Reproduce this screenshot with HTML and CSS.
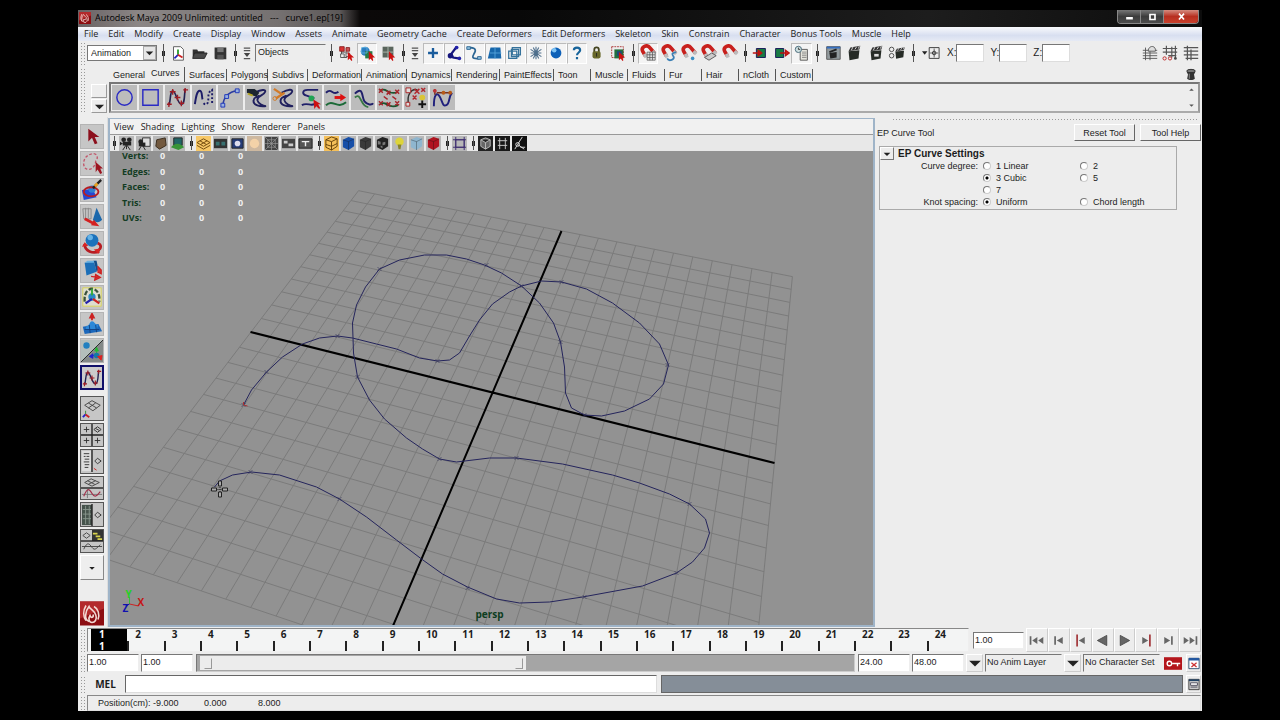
FILE: index.html
```html
<!DOCTYPE html>
<html lang="en">
<head>
<meta charset="utf-8">
<title>Autodesk Maya 2009 Unlimited</title>
<link rel="stylesheet" href="styles.css">
</head>
<body>
<svg class="sprite" aria-hidden="true">
<defs>
<symbol id="maya" viewBox="0 0 24 24"><rect width="24" height="24" fill="#8c0d12"/><path d="M0 0h24v7L0 17z" fill="#b32a2c"/><path d="M9 20c-5-2-4-10 0-15 1 3 6 4 7 9 1 4-1 7-4 7s-4-4-2-7c1 3 4 2 3-1M6 4c-3 5-3 11 0 15M14 5c4 2 6 8 4 13" fill="none" stroke="#f3d9d4" stroke-width="1.6"/></symbol>
<symbol id="new" viewBox="0 0 20 20"><path d="M5 3h8l3 3v12H5z" fill="#fff" stroke="#555"/><path d="M10 6v6" stroke="#2a9a2a" stroke-width="2"/><path d="M10 12l-4 4" stroke="#22b" stroke-width="2"/><path d="M10 12l5 3" stroke="#c22" stroke-width="2"/></symbol>
<symbol id="open" viewBox="0 0 20 20"><path d="M3 6h5l1 2h7v2H6l-3 5z" fill="#333"/><path d="M5 10h14l-3 6H3z" fill="#4a4a4a" stroke="#222"/></symbol>
<symbol id="save" viewBox="0 0 20 20"><path d="M4 4h13v13H5l-1-1z" fill="#333"/><path d="M7 4h7v5H7z" fill="#777"/><path d="M7 12h7v5H7z" fill="#555"/></symbol>
<symbol id="chev" viewBox="0 0 10 20"><path d="M1 4h8M1 7h8M1 17h8" stroke="#555" stroke-width="1.500"/><path d="M1 10h8l-4 5z" fill="#444"/></symbol>
<symbol id="hier" viewBox="0 0 20 20"><path d="M5 6v9h6M5 9h6" fill="none" stroke="#444"/><path d="M3 3h5v5H3z" fill="#d33" stroke="#822"/><path d="M10 4h4v4h-4z" fill="#c55" stroke="#822"/><path d="M4 11h4v4H4zM10 10h4v4h-4z" fill="#eee" stroke="#555"/><path d="M12 9v9l2-2 2 3 1-1-1-3h3z" fill="#c11"/></symbol>
<symbol id="obj" viewBox="0 0 20 20"><circle cx="8" cy="8" r="5" fill="#2b7cc0"/><path d="M8 8h8v8H8z" fill="#287d49"/><path d="M4 4h6v6H4z" fill="none" stroke="#5db0e0"/><path d="M12 8v10l2-2 2 3 1-1-1-3h3z" fill="#c11"/></symbol>
<symbol id="comp" viewBox="0 0 20 20"><path d="M4 3h12v12H4z" fill="#5a655c"/><path d="M4 9h12M10 3v12" stroke="#aeb9ae"/><path d="M11 8v10l2-2 2 3 1-1-1-3h3z" fill="#c11"/></symbol>
<symbol id="plus" viewBox="0 0 20 20"><path d="M10 4.500v11M4.500 10h11" stroke="#1a5c9c" stroke-width="2.600"/></symbol>
<symbol id="joint" viewBox="0 0 20 20"><path d="M13 3L7 11l2 4 6 1" fill="none" stroke="#15157c" stroke-width="2.500"/><circle cx="13" cy="4" r="2" fill="#22a"/><circle cx="6" cy="13" r="3" fill="#15157c"/><circle cx="16" cy="16" r="2" fill="#22a"/></symbol>
<symbol id="curve" viewBox="0 0 20 20"><path d="M3 5c5-2 10 0 8 4s-6 8 5 7" fill="none" stroke="#2c6694" stroke-width="2"/><path d="M2 3h4v3H2zM14 14h4v3h-4z" fill="#8fc0dd" stroke="#2c6694"/></symbol>
<symbol id="surf" viewBox="0 0 20 20"><path d="M5 4h11l1 12H2z" fill="#1767ab"/><path d="M4 10h13M10 4v12" stroke="#56a3da"/></symbol>
<symbol id="cage" viewBox="0 0 20 20"><path d="M3 8h9v8H3zM7 4h9v8H7zM6 6h8v8H6z" fill="none" stroke="#35729b" stroke-width="1.400"/></symbol>
<symbol id="burst" viewBox="0 0 20 20"><path d="M10 3v14M4 6l12 8M4 14l12-8M4 10h12M7 4l6 12M13 4L7 16" stroke="#4e6f8c" stroke-width="1.200"/></symbol>
<symbol id="ball" viewBox="0 0 20 20"><circle cx="10" cy="10" r="6" fill="#0d60b8"/><circle cx="8" cy="7" r="2.500" fill="#7fc4f5"/></symbol>
<symbol id="quest" viewBox="0 0 20 20"><path d="M6.500 7c0-4 7-4 7 0 0 2.500-3.500 2.500-3.500 5.500M10 14.500v2.500" fill="none" stroke="#17649b" stroke-width="2.400"/></symbol>
<symbol id="lock" viewBox="0 0 20 20"><path d="M7 9V6c0-3 5-3 5 0v3" fill="none" stroke="#444420" stroke-width="2"/><rect x="5" y="8" width="9" height="8" rx="2" fill="#68682a"/><path d="M9.500 10v4" stroke="#222"/></symbol>
<symbol id="selh" viewBox="0 0 20 20"><path d="M3 3h13v12H3z" fill="none" stroke="#a33" stroke-dasharray="2 1"/><path d="M6 6h10v10H6z" fill="#236e3d"/><path d="M9 8h5v5H9z" fill="#1c4680"/><path d="M11 9v9l2-2 2 3 1-1-1-3h3z" fill="#c11"/></symbol>
<symbol id="mag" viewBox="0 0 20 20"><path d="M7 13L4 8c-2-5 5-8 8-4l5 6" fill="none" stroke="#c8201c" stroke-width="4"/><path d="M6 11l2 4M15 8l3 3" stroke="#bbb" stroke-width="4"/></symbol>
<symbol id="mgrid" viewBox="0 0 20 20"><use href="#mag"/><path d="M9 9h9v9H9zM12 9v9M15 9v9M9 12h9M9 15h9" fill="#ddd" stroke="#555" stroke-width=".8"/></symbol>
<symbol id="mcurve" viewBox="0 0 20 20"><use href="#mag"/><path d="M8 16c2 4 9 1 7-2s-2-4 3-5" fill="none" stroke="#3a7fb4" stroke-width="2"/></symbol>
<symbol id="mpoint" viewBox="0 0 20 20"><use href="#mag"/><circle cx="14" cy="16" r="2" fill="#3a8fc4"/></symbol>
<symbol id="mplane" viewBox="0 0 20 20"><use href="#mag"/><path d="M5 15l8-5 5 3-8 5z" fill="#ccc" stroke="#555"/></symbol>
<symbol id="inop" viewBox="0 0 20 20"><path d="M6 5h10v10H6z" fill="#187a44" stroke="#115"/><path d="M2 10h8M8 7l4 3-4 3z" stroke="#b11" fill="#d22" stroke-width="1.500"/></symbol>
<symbol id="outop" viewBox="0 0 20 20"><path d="M4 5h9v10H4z" fill="#187a44" stroke="#115"/><path d="M9 10h7M15 7l4 3-4 3z" stroke="#b11" fill="#d22" stroke-width="1.500"/></symbol>
<symbol id="hist" viewBox="0 0 20 20"><path d="M8 6h8v12H8z" fill="#e5e5dc" stroke="#555"/><path d="M10 9h5M10 11h5M10 13h5M10 15h5" stroke="#777" stroke-width=".8"/><circle cx="6" cy="6" r="3.500" fill="#cfe0e0" stroke="#467"/><path d="M6 4v2h2" fill="none" stroke="#333"/></symbol>
<symbol id="clap" viewBox="0 0 20 20"><path d="M4 8l12-1-1 9-10 2z" fill="#262b26"/><path d="M4 8l2-4 11-2-1 4z" fill="#333"/><path d="M7 7l2-4M11 6l2-3M15 5l1-3" stroke="#ddd"/></symbol>
<symbol id="rview" viewBox="0 0 20 20"><path d="M3 3h15v14H3z" fill="#929a9d" stroke="#555"/><path d="M3 3h15v2H3z" fill="#356fc0"/><path d="M6 10l8-1v6l-7 1z" fill="#222"/><path d="M6 9l8-3" stroke="#222" stroke-width="2"/></symbol>
<symbol id="ipr" viewBox="0 0 20 20"><use href="#clap"/><path d="M8 11h5v3H8z" fill="#ddd"/></symbol>
<symbol id="rset" viewBox="0 0 20 20"><g transform="translate(5 0)"><use href="#clap" width="16" height="20"/></g><circle cx="4" cy="6" r="2.500" fill="none" stroke="#444"/><circle cx="4" cy="13" r="2.500" fill="none" stroke="#444"/></symbol>
<symbol id="abs" viewBox="0 0 20 20"><path d="M0 8h6l-3 4z" fill="#222"/><path d="M8 4h11v12H8z" fill="none" stroke="#333"/><path d="M13.500 5v10M9 10h9" stroke="#555"/><circle cx="13.500" cy="10" r="2" fill="none" stroke="#333"/></symbol>
<symbol id="ed1" viewBox="0 0 20 20"><path d="M2 7h16M2 10h16M2 13h16M2 16h16M5 4v14M10 8v10" stroke="#555"/><path d="M8 8c0-7 9-7 8 0z" fill="#ddd" stroke="#555"/></symbol>
<symbol id="ed2" viewBox="0 0 20 20"><path d="M2 5h16M2 9h16M6 2v10M12 3v12M16 2v14M8 13h9" stroke="#555" stroke-width="1.300"/><circle cx="4" cy="16" r="1.800" fill="none" stroke="#b22"/><circle cx="10" cy="16" r="1.800" fill="none" stroke="#b22"/><circle cx="16" cy="16" r="1.500" fill="#444"/></symbol>
<symbol id="ed3" viewBox="0 0 20 20"><path d="M2 4h16M2 8h16M2 12h16M4 16h14M6 2v16M10 6v12" stroke="#555" stroke-width="1.400"/></symbol>
<symbol id="trash" viewBox="0 0 14 14"><ellipse cx="7" cy="3" rx="5" ry="2" fill="#777" stroke="#222"/><path d="M2 4h10l-1.500 3 1 5c-2 2-7 2-9 0l1-5z" fill="#333"/><path d="M5 6v6" stroke="#999"/></symbol>
<symbol id="s-circle" viewBox="0 0 24 24"><circle cx="12" cy="12" r="8" fill="none" stroke="#2a2ac4" stroke-width="1.500"/></symbol>
<symbol id="s-square" viewBox="0 0 24 24"><path d="M4 4h16v16H4z" fill="none" stroke="#2a2ac4" stroke-width="1.500"/></symbol>
<symbol id="s-ep" viewBox="0 0 24 24"><path d="M3 20C5 16 4 5 7 5s5 14 9 14 3-11 4-16" fill="none" stroke="#222250" stroke-width="1.700"/><path d="M1 19h5M3 17v5M4 6h6M7 3v6M9 12h6M12 9v6M14 18h5M16 15v6M18 4h5M20 2v5" stroke="#a01c24" stroke-width="1.400"/></symbol>
<symbol id="s-pencil" viewBox="0 0 24 24"><path d="M3 19C4 12 5 5 8 5s2 6 3 9" fill="none" stroke="#1c1c68" stroke-width="2"/><path d="M12 18c3 3 5 0 5-4s0-8 4-10v14" fill="none" stroke="#1c1c68" stroke-width="2" stroke-dasharray="2 2"/></symbol>
<symbol id="s-arc" viewBox="0 0 24 24"><path d="M4 20c1-9 7-14 15-15" fill="none" stroke="#2c3ca0" stroke-width="1.600"/><path d="M2 18h4v4H2zM6 9h4v4H6zM17 3h4v4h-4z" fill="#9ab2dd" stroke="#2038bb"/></symbol>
<symbol id="s-attach" viewBox="0 0 24 24"><path d="M10 7c7-3 12-4 11-1-1 4-9 4-8 9 1 4 6 6 9 6-6 1-14-1-13-6 0-3 3-4 6-5" fill="none" stroke="#20205e" stroke-width="2"/><path d="M2 3h8l5 4-3 4-4-1-6-3z" fill="#1c2430"/><path d="M3 8l5 2" stroke="#b6a620" stroke-width="2"/></symbol>
<symbol id="s-detach" viewBox="0 0 24 24"><path d="M10 7c7-4 12-4 11-1-1 4-9 4-8 9 1 4 6 6 9 6-6 1-14-1-13-6 0-3 3-4 6-5" fill="none" stroke="#20205e" stroke-width="2"/><path d="M2 3l9 6M4 13l9-6" stroke="#d27a28" stroke-width="2.500"/><circle cx="3" cy="13" r="2" fill="none" stroke="#d27a28"/></symbol>
<symbol id="s-align" viewBox="0 0 24 24"><path d="M20 4H9C3 4 3 9 8 10l8 3M3 20c5-3 9 1 13-1" fill="none" stroke="#20206a" stroke-width="2"/><circle cx="13" cy="13" r="3" fill="#20a454"/><path d="M15 14l1 10 2-3 3 3 1-1-2-4h3z" fill="#c11"/></symbol>
<symbol id="s-off" viewBox="0 0 24 24"><path d="M1 7c6-6 7 4 13-1" fill="none" stroke="#20206a" stroke-width="2"/><path d="M1 20c8-7 11 5 21-3" fill="none" stroke="#1c6a38" stroke-width="2"/><path d="M10 12h7" stroke="#d11" stroke-width="3"/><path d="M16 8l6 4-6 4z" fill="#d11"/></symbol>
<symbol id="s-rev" viewBox="0 0 24 24"><path d="M3 8c9-9 7 4 10 8s8 4 9 2" fill="none" stroke="#20206a" stroke-width="2"/><path d="M3 12c7-6 5 9 14 10" fill="none" stroke="#387644" stroke-width="2"/></symbol>
<symbol id="s-rebuild" viewBox="0 0 24 24"><path d="M2 5c7-5 8 6 19 1M2 19c7-5 8 6 19 1" fill="none" stroke="#1c5530" stroke-width="2"/><path d="M1 3l4 4m0-4L1 7M9 5l4 4m0-4L9 9M18 4l4 4m0-4l-4 4M1 16l4 4m0-4l-4 4M9 17l4 4m0-4l-4 4M18 16l4 4m0-4l-4 4M6 11l4 3m5-3l4 3" stroke="#a8242a" stroke-width="1.500"/></symbol>
<symbol id="s-addpt" viewBox="0 0 24 24"><path d="M4 20C1 9 7 2 13 4" fill="none" stroke="#333" stroke-width="1.500"/><path d="M1 2h5v5H1zM1 17h4v4H1z" fill="#ddd" stroke="#a22"/><path d="M10 3l5 5m0-5l-5 5M17 2l4 4m0-4l-4 4M8 10l4 4m0-4l-4 4" stroke="#b1282e" stroke-width="1.500"/><circle cx="18" cy="12" r="3" fill="#dac536"/><path d="M18 15v8M14 19h8" stroke="#111" stroke-width="2"/></symbol>
<symbol id="s-edit" viewBox="0 0 24 24"><path d="M3 21C3 9 6 6 9 11s3 11 7 9 2-9 6-13" fill="none" stroke="#20207c" stroke-width="2"/><path d="M4 3v6M6 7h14" stroke="#743020" stroke-width="1.500"/><circle cx="4" cy="5" r="2" fill="#b33"/><circle cx="13" cy="7" r="2" fill="#b65a18"/><circle cx="20" cy="7" r="2" fill="#b65a18"/></symbol>
<symbol id="t-sel" viewBox="0 0 24 24"><path d="M8 4v14l4-4 3 7 3-1-3-7h5z" fill="#8c0f1c"/></symbol>
<symbol id="t-lasso" viewBox="0 0 24 24"><path d="M9 3c8-4 11 3 7 7 0 4-3 9-8 9C1 19 1 6 9 3z" fill="none" stroke="#c2566a" stroke-width="1.500" stroke-dasharray="3 2"/><path d="M16 11v11l2-3 3 5 2-1-2-5h3z" fill="#9c1420"/></symbol>
<symbol id="t-paint" viewBox="0 0 24 24"><path d="M1 12l12-1 4 9-14 3z" fill="#2448d4"/><circle cx="12" cy="11" r="4" fill="#2f7fd0"/><ellipse cx="11" cy="14" rx="8" ry="5" fill="none" stroke="#b81c20" stroke-width="2"/><path d="M13 10l9-9" stroke="#222" stroke-width="2.500"/><path d="M15 8l3-3" stroke="#e8a020" stroke-width="3"/></symbol>
<symbol id="t-move" viewBox="0 0 24 24"><path d="M2 3h9v11H3zM5 2v11M8 2v11" fill="#c4c4c4" stroke="#888"/><path d="M17 2l6 13c-3 4-8 3-10 0z" fill="#1b68ac"/><path d="M4 14l10 5" stroke="#d32020" stroke-width="3"/><path d="M14 15l6 7-9-1z" fill="#d32020"/></symbol>
<symbol id="t-rot" viewBox="0 0 24 24"><path d="M4 12c0 8 9 11 16 8M18 11c5 2 4 6 1 8" fill="none" stroke="#b71c22" stroke-width="3"/><circle cx="12" cy="8" r="7" fill="#1c72bc"/><circle cx="10" cy="5" r="3" fill="#65b2e6"/><path d="M1 15l3-5 4 4zM14 18l7-1-2 6z" fill="#d92424"/></symbol>
<symbol id="t-scale" viewBox="0 0 24 24"><path d="M4 4l10-2 3 12-11 4z" fill="#1c6fb8"/><path d="M4 4l3-2h10l-3 2z" fill="#6ab1e0"/><path d="M14 2l3 0 2 10-2 2z" fill="#124f8c"/><path d="M11 19l7 1M18 8l4 4v4l-4-2M16 17l5 3-6 3z" fill="#d33" stroke="#c22" stroke-width="1.500"/></symbol>
<symbol id="t-uni" viewBox="0 0 24 24"><path d="M2 2h20v20H2z" fill="#deddd0" stroke="#dcd850"/><path d="M4 17C3 6 9 3 12 3s9 3 8 14" fill="none" stroke="#3a513c" stroke-width="2.500" stroke-dasharray="5 2"/><circle cx="12" cy="12" r="4" fill="#2a8ac4"/><path d="M12 3v7" stroke="#3a3" stroke-width="2"/><path d="M12 14l-7 5" stroke="#22a" stroke-width="2.500"/><path d="M13 14l7 5" stroke="#c22" stroke-width="2.500"/></symbol>
<symbol id="t-soft" viewBox="0 0 24 24"><path d="M12 8V2M10 5l2-4 2 4z" stroke="#c22" stroke-width="2" fill="#c22"/><path d="M2 15l17-3 4 8-19 3z" fill="#1b67bb"/><path d="M6 14c4 0 3-5 6-5s3 4 7 4l-2 5H5z" fill="#2d88d8"/><path d="M4 18h16M9 13l1 9M16 13l1 8" stroke="#123f7f"/></symbol>
<symbol id="t-manip" viewBox="0 0 24 24"><path d="M0 0h24L0 24z" fill="#b4bebb"/><path d="M24 0v24H0z" fill="#838988"/><path d="M24 0L0 24" stroke="#222"/><circle cx="6" cy="6" r="3.500" fill="#2080c0"/><path d="M17 17v-7M15 12l2-4 2 4z" stroke="#2b3" fill="#2b3"/><path d="M17 17h-6M13 15l-4 3 4 2z" stroke="#22c" fill="#22c"/><circle cx="17" cy="17" r="3" fill="#1478a8"/><path d="M18 18l5-1-1 5z" fill="#d22" stroke="#d22"/></symbol>
<symbol id="l-persp" viewBox="0 0 24 24"><path d="M4 9l8-5 9 5-8 6zM8 6.500l9 5.500M16 6.500L8 12" fill="none" stroke="#444"/><path d="M5 15v4" stroke="#383"/><path d="M5 19l-3 3" stroke="#22c" stroke-width="2"/><path d="M5 19l4 3" stroke="#c22" stroke-width="2"/></symbol>
<symbol id="l-four" viewBox="0 0 24 24"><path d="M12 0v24M0 12h24" stroke="#222" stroke-width="1.500"/><path d="M3 6h6M6 3v6M3 18h6M6 15v6M15 18h6M18 15v6M14 6l4-3 4 3-4 3zM16 5l4 2" fill="none" stroke="#333"/></symbol>
<symbol id="l-out" viewBox="0 0 24 24"><path d="M1 1h10v22H1z" fill="#ddd"/><path d="M12 0v24" stroke="#222" stroke-width="1.500"/><path d="M3 4h6M3 7h2M6 7h3M4 10h5M3 13h6M4 16h5M4 19h4M15 12l3-3 4 3-4 3z" fill="none" stroke="#333"/><path d="M14 20l3 2" stroke="#c22"/></symbol>
<symbol id="l-graph" viewBox="0 0 24 24"><path d="M0 12h24" stroke="#222" stroke-width="1.500"/><path d="M4 6l7-4 9 4-8 4zM7 4l8 4M16 4L8 8" fill="none" stroke="#444"/><path d="M1 19h22M7 13v10" stroke="#777"/><path d="M3 21c4-10 6-8 9-3s5 3 9-2" fill="none" stroke="#a22d48" stroke-width="1.300"/></symbol>
<symbol id="l-hyper" viewBox="0 0 24 24"><path d="M1 1h11v22H1z" fill="#46534c"/><path d="M2 6h9M2 11h9M2 16h9M5 2v20M9 2v20" stroke="#88968d"/><path d="M12 0v24" stroke="#222" stroke-width="1.500"/><path d="M15 12l3-3 4 3-4 3z" fill="none" stroke="#333"/></symbol>
<symbol id="l-three" viewBox="0 0 24 24"><path d="M12 0h12v12H12z" fill="#333"/><path d="M13 4h5M16 7h5M18 10h5" stroke="#d9d34c" stroke-width="2"/><path d="M0 12h24" stroke="#222" stroke-width="1.500"/><path d="M2 6l4-3 4 3-4 3zM1 18h22M3 21c4-9 6-6 9-2s5 1 9-3" fill="none" stroke="#444"/></symbol>
<symbol id="l-more" viewBox="0 0 24 24"><path d="M9 11h6l-3 3z" fill="#222"/></symbol>
<symbol id="v-cam" viewBox="0 0 16 16"><circle cx="5" cy="4" r="2.500" fill="#222"/><circle cx="11" cy="4" r="2.500" fill="#222"/><path d="M4 6h9v4H4zM1 6l3 2-3 2z" fill="#222"/><path d="M8 9l-4 6M8 9l4 6M8 10v4" stroke="#222"/></symbol>
<symbol id="v-cama" viewBox="0 0 16 16"><path d="M7 2h8v9H7z" fill="#ddd" stroke="#333"/><circle cx="5" cy="6" r="2.500" fill="#222"/><path d="M3 7h7v4H3z" fill="#222"/><path d="M6 10l-3 5M7 10l3 5" stroke="#222"/></symbol>
<symbol id="v-book" viewBox="0 0 16 16"><path d="M4 4l9-2 1 8-7 4-4-3z" fill="#72593f" stroke="#3a2c1c"/></symbol>
<symbol id="v-image" viewBox="0 0 16 16"><path d="M4 2h9v8H4z" fill="#266" stroke="#222"/><path d="M1 12c4-5 10-5 14 0l-6 3z" fill="#389437"/></symbol>
<symbol id="v-grid" viewBox="0 0 16 16"><path d="M0 0h16v16H0z" fill="#f7c867"/><path d="M1 7l7-4 7 4-7 4zM1 10l7 4 7-4M4 5l7 4M12 5L5 9" fill="none" stroke="#70490c"/></symbol>
<symbol id="v-film" viewBox="0 0 16 16"><path d="M1 3h14v10H1z" fill="#333"/><path d="M3 6h4v4H3zM9 6h4v4H9z" fill="#387070"/></symbol>
<symbol id="v-gate" viewBox="0 0 16 16"><path d="M2 3h12v10H2z" fill="#263c78" stroke="#222"/><circle cx="8" cy="8" r="3" fill="#dde"/></symbol>
<symbol id="v-skin" viewBox="0 0 16 16"><path d="M0 0h16v16H0z" fill="#cdb8a0"/><circle cx="8" cy="8" r="5" fill="#f3d2a8"/></symbol>
<symbol id="v-chart" viewBox="0 0 16 16"><path d="M1 1h14v14H1z" fill="#444"/><path d="M1 1l14 14M15 1L1 15M8 1v14M1 8h14M4 4h8v8H4z" fill="none" stroke="#999" stroke-width=".7"/></symbol>
<symbol id="v-safe" viewBox="0 0 16 16"><path d="M1 3h14v10H1z" fill="#444"/><path d="M3 5h4v3H3zM8 8h5v3H8z" fill="#ccc"/></symbol>
<symbol id="v-title" viewBox="0 0 16 16"><path d="M1 3h14v10H1z" fill="#555" stroke="#222"/><path d="M4 6h8M8 6v5" stroke="#eee" stroke-width="1.500"/></symbol>
<symbol id="v-cube" viewBox="0 0 16 16"><path d="M2 4l6-3 6 2v8l-6 4-6-3z" fill="currentColor"/><path d="M2 4l6 2 6-3M8 6v9" stroke="#111" fill="none" opacity=".35"/></symbol>
<symbol id="v-wire" viewBox="0 0 16 16"><path d="M0 0h16v16H0z" fill="#f5c05a"/><path d="M2 4l6-3 6 2v8l-6 4-6-3zM2 4l6 2 6-3M8 6v9M2 9l6 2 6-3" fill="none" stroke="#62400b"/></symbol>
<symbol id="v-tex" viewBox="0 0 16 16"><path d="M2 4l6-3 6 2v8l-6 4-6-3z" fill="#222"/><path d="M3 5l3 1v3H3zM8 7l3-1v3l-3 1zM6 10l2 1v2l-2-1z" fill="#777"/></symbol>
<symbol id="v-bulb" viewBox="0 0 16 16"><circle cx="8" cy="6" r="4.500" fill="#ddd43a"/><path d="M6 9h4l-1 5H7z" fill="#87832c"/></symbol>
<symbol id="v-iso" viewBox="0 0 16 16"><path d="M4 4h9v8H4zM1 4h14M4 1v14M1 12h14M13 1v14" fill="none" stroke="#3c2c70"/></symbol>
<symbol id="v-x1" viewBox="0 0 16 16"><path d="M0 0h16v16H0z" fill="#222"/><path d="M3 4l5-2 5 2v7l-5 3-5-3zM3 4l5 3 5-3M8 7v7" fill="#666" stroke="#bbb"/></symbol>
<symbol id="v-x2" viewBox="0 0 16 16"><path d="M0 0h16v16H0z" fill="#181818"/><path d="M3 5h10M3 10h10M5 2v12M11 2v12" stroke="#ccc"/></symbol>
<symbol id="v-x3" viewBox="0 0 16 16"><path d="M0 0h16v16H0z" fill="#111"/><path d="M11 1L6 9l-3 5M6 9l7 5M9 12h5" stroke="#ddd" fill="none"/><circle cx="6" cy="9" r="2" fill="none" stroke="#ddd"/></symbol>
<symbol id="p-start" viewBox="0 0 20 14"><path d="M3 2v10" stroke="#666" stroke-width="2"/><path d="M11 3v8L5 7zM18 3v8l-6-4z" fill="#666"/></symbol>
<symbol id="p-stepb" viewBox="0 0 20 14"><path d="M6 2v10" stroke="#666" stroke-width="2"/><path d="M15 3v8L8 7z" fill="#666"/></symbol>
<symbol id="p-keyb" viewBox="0 0 20 14"><path d="M6 0v14" stroke="#a23438" stroke-width="2"/><path d="M15 3v8L8 7z" fill="#666"/></symbol>
<symbol id="p-play" viewBox="0 0 20 14"><path d="M5 1v12l11-6z" fill="#666" stroke="#444"/></symbol>
<symbol id="key" viewBox="0 0 20 14"><path d="M0 0h20v14H0z" fill="#b4161c"/><circle cx="6" cy="7" r="2.500" fill="none" stroke="#fff" stroke-width="1.500"/><path d="M9 7h9M15 7v3" stroke="#fff" stroke-width="1.500"/></symbol>
<symbol id="pref" viewBox="0 0 14 14"><path d="M1 1h12v12H1z" fill="#fff" stroke="#246"/><path d="M1 2h12" stroke="#2458a0" stroke-width="3"/><path d="M4 6l6 5M10 6l-6 5" stroke="#c33" stroke-width="1.500"/></symbol>
<symbol id="script" viewBox="0 0 14 14"><path d="M1 1h12v12H1z" fill="#ccc" stroke="#333"/><path d="M1 2h12" stroke="#246" stroke-width="2"/><path d="M3 5h8v3H3zM3 10h8" fill="#fff" stroke="#445"/></symbol>
<symbol id="down" viewBox="0 0 12 12"><path d="M1 4h10L6 9z" fill="#222"/></symbol>
<symbol id="up-s" viewBox="0 0 8 8"><path d="M2 5h4L4 3z" fill="#555"/></symbol>
<symbol id="down-s" viewBox="0 0 8 8"><path d="M2 3h4L4 5z" fill="#555"/></symbol>
</defs>
</svg>

<div class="app">
<header class="titlebar">
  <svg class="logo"><use href="#maya"/></svg>
  <h1>Autodesk Maya 2009 Unlimited: untitled &nbsp; --- &nbsp; curve1.ep[19]</h1>
  <div class="winbtns">
    <button aria-label="Minimize"><svg viewBox="0 0 12 12"><path d="M2 6h8v3H2z" fill="#fff"/></svg></button>
    <button aria-label="Restore"><svg viewBox="0 0 12 12"><path d="M3 3h6v6H3z" fill="none" stroke="#fff" stroke-width="2"/></svg></button>
    <button class="close" aria-label="Close"><svg viewBox="0 0 12 12"><path d="M3 2l6 7M9 2L3 9" stroke="#fff" stroke-width="2"/></svg></button>
  </div>
</header>

<nav class="menubar">
  <button>File</button><button>Edit</button><button>Modify</button><button>Create</button><button>Display</button><button>Window</button><button>Assets</button><button>Animate</button><button>Geometry Cache</button><button>Create Deformers</button><button>Edit Deformers</button><button>Skeleton</button><button>Skin</button><button>Constrain</button><button>Character</button><button>Bonus Tools</button><button>Muscle</button><button>Help</button>
</nav>

<div class="status">
  <i class="grip"></i>
  <div class="dropdown"><select aria-label="Menu set"><option>Animation</option></select><svg><use href="#down"/></svg></div>
  <i class="sep"></i>
  <div class="group g3"><button aria-label="New"><svg><use href="#new"/></svg></button><button aria-label="Open"><svg><use href="#open"/></svg></button><button aria-label="Save"><svg><use href="#save"/></svg></button></div>
  <i class="sep"></i>
  <svg class="chev"><use href="#chev"/></svg>
  <input class="mask" aria-label="Selection mask" value="Objects">
  <i class="sep"></i>
  <div class="group g3"><button aria-label="Hierarchy"><svg><use href="#hier"/></svg></button><button class="on" aria-label="Object"><svg><use href="#obj"/></svg></button><button aria-label="Component"><svg><use href="#comp"/></svg></button></div>
  <i class="sep"></i>
  <svg class="chev"><use href="#chev"/></svg>
  <div class="group g10"><button class="on" aria-label="Handles"><svg><use href="#plus"/></svg></button><button class="on" aria-label="Joints"><svg><use href="#joint"/></svg></button><button class="on" aria-label="Curves"><svg><use href="#curve"/></svg></button><button class="on" aria-label="Surfaces"><svg><use href="#surf"/></svg></button><button class="on" aria-label="Deformations"><svg><use href="#cage"/></svg></button><button class="on" aria-label="Dynamics"><svg><use href="#burst"/></svg></button><button class="on" aria-label="Rendering"><svg><use href="#ball"/></svg></button><button class="on" aria-label="Miscellaneous"><svg><use href="#quest"/></svg></button><button aria-label="Lock"><svg><use href="#lock"/></svg></button><button aria-label="Highlight"><svg><use href="#selh"/></svg></button></div>
  <i class="sep"></i>
  <div class="group g5"><button class="on" aria-label="Snap to grids"><svg><use href="#mgrid"/></svg></button><button aria-label="Snap to curves"><svg><use href="#mcurve"/></svg></button><button aria-label="Snap to points"><svg><use href="#mpoint"/></svg></button><button aria-label="Snap to planes"><svg><use href="#mplane"/></svg></button><button aria-label="Make live"><svg><use href="#mag"/></svg></button></div>
  <i class="sep"></i>
  <div class="group g3"><button aria-label="Inputs"><svg><use href="#inop"/></svg></button><button aria-label="Outputs"><svg><use href="#outop"/></svg></button><button class="on" aria-label="History"><svg><use href="#hist"/></svg></button></div>
  <i class="sep"></i>
  <div class="group g4"><button aria-label="Render view"><svg><use href="#rview"/></svg></button><button aria-label="Render"><svg><use href="#clap"/></svg></button><button aria-label="IPR render"><svg><use href="#ipr"/></svg></button><button aria-label="Render settings"><svg><use href="#rset"/></svg></button></div>
  <i class="sep"></i>
  <button class="abs" aria-label="Absolute transform"><svg><use href="#abs"/></svg></button>
  <div class="coords"><label>X:<input></label><label>Y:<input></label><label>Z:<input></label></div>
  <div class="group g3 end"><button aria-label="Attribute Editor"><svg><use href="#ed1"/></svg></button><button aria-label="Tool Settings"><svg><use href="#ed2"/></svg></button><button aria-label="Channel Box"><svg><use href="#ed3"/></svg></button></div>
</div>

<div class="shelf">
  <i class="grip"></i>
  <div class="shelfside"><button aria-label="Shelf tabs"></button><button aria-label="Shelf menu"><svg><use href="#down"/></svg></button></div>
  <div class="shelfmain">
    <div class="tabs">
      <button class="w41 nobar">General</button><button class="w35 active">Curves</button><button class="w42">Surfaces</button><button class="w41">Polygons</button><button class="w39">Subdivs</button><button class="w54">Deformation</button><button class="w45">Animation</button><button class="w45">Dynamics</button><button class="w48">Rendering</button><button class="w54">PaintEffects</button><button>Toon</button><button>Muscle</button><button>Fluids</button><button>Fur</button><button>Hair</button><button>nCloth</button><button>Custom</button>
      <svg class="trash"><use href="#trash"/></svg>
    </div>
    <div class="shelfbox">
      <div class="shelficons"><button aria-label="Circle"><svg><use href="#s-circle"/></svg></button><button aria-label="Square"><svg><use href="#s-square"/></svg></button><button aria-label="EP Curve"><svg><use href="#s-ep"/></svg></button><button aria-label="Pencil"><svg><use href="#s-pencil"/></svg></button><button aria-label="Arc"><svg><use href="#s-arc"/></svg></button><button aria-label="Attach"><svg><use href="#s-attach"/></svg></button><button aria-label="Detach"><svg><use href="#s-detach"/></svg></button><button aria-label="Align"><svg><use href="#s-align"/></svg></button><button aria-label="Offset"><svg><use href="#s-off"/></svg></button><button aria-label="Reverse"><svg><use href="#s-rev"/></svg></button><button aria-label="Rebuild"><svg><use href="#s-rebuild"/></svg></button><button aria-label="Add points"><svg><use href="#s-addpt"/></svg></button><button aria-label="Edit curve"><svg><use href="#s-edit"/></svg></button></div>
      <div class="scroll"><button aria-label="Scroll up"><svg><use href="#up-s"/></svg></button><button aria-label="Scroll down"><svg><use href="#down-s"/></svg></button></div>
    </div>
  </div>
</div>

<main class="work">
  <aside class="toolbox">
    <div class="tools"><button aria-label="Select"><svg><use href="#t-sel"/></svg></button><button aria-label="Lasso"><svg><use href="#t-lasso"/></svg></button><button aria-label="Paint select"><svg><use href="#t-paint"/></svg></button><button aria-label="Move"><svg><use href="#t-move"/></svg></button><button aria-label="Rotate"><svg><use href="#t-rot"/></svg></button><button aria-label="Scale"><svg><use href="#t-scale"/></svg></button><button aria-label="Universal"><svg><use href="#t-uni"/></svg></button><button aria-label="Soft modification"><svg><use href="#t-soft"/></svg></button><button aria-label="Show manipulator"><svg><use href="#t-manip"/></svg></button><button class="current" aria-label="EP Curve Tool"><svg><use href="#s-ep"/></svg></button></div>
    <div class="layouts"><button aria-label="Perspective"><svg><use href="#l-persp"/></svg></button><button aria-label="Four view"><svg><use href="#l-four"/></svg></button><button aria-label="Outliner"><svg><use href="#l-out"/></svg></button><button aria-label="Graph"><svg><use href="#l-graph"/></svg></button><button aria-label="Hypershade"><svg><use href="#l-hyper"/></svg></button><button aria-label="Three view"><svg><use href="#l-three"/></svg></button><button class="more" aria-label="More"><svg><use href="#l-more"/></svg></button></div>
    <svg class="bigmaya"><use href="#maya"/></svg>
  </aside>

  <section class="panel">
    <nav class="panelmenu"><button>View</button><button>Shading</button><button>Lighting</button><button>Show</button><button>Renderer</button><button>Panels</button></nav>
    <div class="panelbar">
      <i class="sep"></i>
      <div class="vg"><svg><use href="#v-cam"/></svg><svg><use href="#v-cama"/></svg><svg><use href="#v-book"/></svg><svg><use href="#v-image"/></svg></div>
      <i class="sep"></i>
      <div class="vg"><svg><use href="#v-grid"/></svg><svg><use href="#v-film"/></svg><svg><use href="#v-gate"/></svg><svg><use href="#v-skin"/></svg><svg><use href="#v-chart"/></svg><svg><use href="#v-safe"/></svg><svg><use href="#v-title"/></svg></div>
      <i class="sep"></i>
      <div class="vg"><svg><use href="#v-wire"/></svg><svg class="blue"><use href="#v-cube"/></svg><svg class="dark"><use href="#v-cube"/></svg><svg><use href="#v-tex"/></svg><svg><use href="#v-bulb"/></svg><svg class="pale"><use href="#v-cube"/></svg><svg class="red"><use href="#v-cube"/></svg></div>
      <i class="sep"></i>
      <div class="vg"><svg><use href="#v-iso"/></svg></div>
      <i class="sep"></i>
      <div class="vg"><svg><use href="#v-x1"/></svg><svg><use href="#v-x2"/></svg><svg><use href="#v-x3"/></svg></div>
    </div>
    <div class="view">
      <svg class="scene" viewBox="110 151 764 474" preserveAspectRatio="xMidYMid slice">
        <g id="grid" class="grid"></g>
        <path class="axis" d="M251 332L775 463M562 231L393 627"/>
        <polyline class="curve" points="244,405 252,390 267,372 283,357 303,344 320,338 338,336 353,338 377,344 397,349 420,358 438,361 450,360 460,353 470,336 480,320 493,304 510,292 522,286 542,281 562,282 587,289 613,303 640,323 660,344 669,365 664,384 650,399 625,411 602,416 585,415 572,408 566,393 565,367 561,342 554,323 540,303 522,286 502,273 485,265 467,259 447,255 425,255 400,260 380,269 366,287 357,305 353,323 354,353 358,377 370,400 385,419 407,438 423,449 440,459 457,462 490,458 517,458 563,464 613,475 640,483 670,494 690,504 706,519 710,533 705,548 693,562 677,573 643,586 583,597 550,602 520,603 497,599 468,587 443,574 422,559 397,540 367,517 340,499 317,487 280,475 252,472 233,475 220,481 215,487"/>
        <g id="marks" class="marks"></g>
        <path d="M244 402v3l4 1" fill="none" stroke="#a33"/>
        <path class="cursor" d="M219 481h3v5h-3zM219 492h3v5h-3zM212 488h5v3h-5zM223 488h5v3h-5z"/>
        <path d="M218 489.500h5M220.500 487v5" stroke="#222" stroke-dasharray="1 1"/>
        <path d="M130 604v-7" stroke="#33c233"/><path d="M130 604l9 2" stroke="#c22"/><path d="M130 604l-4 2" stroke="#11a"/>
        <text x="126" y="598" class="gizmo gy">Y</text><text x="138" y="606" class="gizmo gx">X</text><text x="123" y="612" class="gizmo gz">Z</text>
        <text x="476" y="618" class="camname">persp</text>
      </svg>
      <table class="stats">
        <tr><th>Verts:</th><td>0</td><td>0</td><td>0</td></tr>
        <tr><th>Edges:</th><td>0</td><td>0</td><td>0</td></tr>
        <tr><th>Faces:</th><td>0</td><td>0</td><td>0</td></tr>
        <tr><th>Tris:</th><td>0</td><td>0</td><td>0</td></tr>
        <tr><th>UVs:</th><td>0</td><td>0</td><td>0</td></tr>
      </table>
    </div>
  </section>

  <section class="settings">
    <i class="hgrip"></i>
    <div class="settingshead"><h2>EP Curve Tool</h2><button>Reset Tool</button><button>Tool Help</button></div>
    <div class="frame">
      <div class="framehead"><button aria-label="Collapse"><svg><use href="#down"/></svg></button><h3>EP Curve Settings</h3></div>
      <div class="opts">
        <span class="name">Curve degree:</span><label><input type="radio" name="deg">1 Linear</label><label><input type="radio" name="deg">2</label>
        <span></span><label><input type="radio" name="deg" checked>3 Cubic</label><label><input type="radio" name="deg">5</label>
        <span></span><label><input type="radio" name="deg">7</label><span></span>
        <span class="name">Knot spacing:</span><label><input type="radio" name="knot" checked>Uniform</label><label><input type="radio" name="knot">Chord length</label>
      </div>
    </div>
  </section>
</main>

<div class="row time">
  <i class="grip"></i>
  <ol class="timeline" id="timeline"></ol>
  <input class="num" aria-label="Current time" value="1.00">
  <div class="play"><button aria-label="Go to start"><svg><use href="#p-start"/></svg></button><button aria-label="Step back"><svg><use href="#p-stepb"/></svg></button><button aria-label="Previous key"><svg><use href="#p-keyb"/></svg></button><button aria-label="Play backwards"><svg class="flip"><use href="#p-play"/></svg></button><button aria-label="Play"><svg><use href="#p-play"/></svg></button><button aria-label="Next key"><svg class="flip"><use href="#p-keyb"/></svg></button><button aria-label="Step forward"><svg class="flip"><use href="#p-stepb"/></svg></button><button aria-label="Go to end"><svg class="flip"><use href="#p-start"/></svg></button></div>
</div>

<div class="row range">
  <i class="grip"></i>
  <input class="num" aria-label="Start" value="1.00"><input class="num" aria-label="Playback start" value="1.00">
  <div class="track"><div class="thumb"><button aria-label="Range start"></button><button aria-label="Range end"></button></div></div>
  <input class="num" aria-label="Playback end" value="24.00"><input class="num" aria-label="End" value="48.00">
  <button class="arrow" aria-label="Anim layer menu"><svg><use href="#down"/></svg></button><input class="pick" aria-label="Anim layer" value="No Anim Layer">
  <button class="arrow" aria-label="Character set menu"><svg><use href="#down"/></svg></button><input class="pick" aria-label="Character set" value="No Character Set">
  <button class="keybtn" aria-label="Auto key"><svg><use href="#key"/></svg></button><button class="tiny" aria-label="Preferences"><svg><use href="#pref"/></svg></button>
</div>

<div class="row cmd">
  <i class="grip"></i>
  <label for="mel">MEL</label><input id="mel"><output></output><button class="tiny" aria-label="Script editor"><svg><use href="#script"/></svg></button>
</div>

<footer class="row help">
  <i class="grip"></i>
  <p><span>Position(cm): -9.000</span><span>0.000</span><span>8.000</span></p>
</footer>
</div>
<script src="scene.js"></script>
</body>
</html>
```
FILE: styles.css
```css
* { box-sizing: border-box; }
body {
  margin: 0; min-height: 100vh; padding: 10px 78px 9px; background: #000; color: #1c1c1c; display: flex;
  font: 9px/12px "Liberation Sans", Arial, sans-serif;
}
button, input, select { font: inherit; color: inherit; margin: 0; padding: 0; border: 0; border-radius: 0; background: none; }
h1, h2, h3, p, ol { margin: 0; padding: 0; font: inherit; }
svg { display: block; }
.sprite { position: absolute; width: 0; height: 0; }
.app { flex: 1; min-width: 0; display: flex; flex-direction: column; background: #ededed; }

.titlebar { height: 17px; display: flex; align-items: center; padding: 0 3px 2px 1px; background: linear-gradient(90deg, #686264, #8b8686 60px, #757171 200px, #5c5858 262px, #0b0909 282px, #080808 440px, #1d1d1d 850px, #0c0c0c); }
.logo { width: 12px; height: 12px; }
.titlebar h1 { margin-left: 4px; font: 9px/14px "Open Sans", sans-serif; color: #000; flex: 1; white-space: nowrap; }
.winbtns { display: flex; align-self: flex-start; border: 1px solid #888; border-top: 0; border-radius: 0 0 4px 4px; overflow: hidden; }
.winbtns button { width: 23px; height: 13px; background: linear-gradient(#777, #3c3c3c 50%, #4c4c4c); border-right: 1px solid #888; display: grid; place-items: center; }
.winbtns .close { width: 34px; border: 0; background: linear-gradient(#d58c80, #b72f20 50%, #c9402c); }
.winbtns svg { width: 11px; height: 10px; }

.menubar { height: 14px; display: flex; gap: 10px; padding-left: 6px; background: linear-gradient(#f8f9fc, #d8dff0 60%, #e6eaf5); }
.menubar button, .panelmenu button { font: 9px/14px "Open Sans", sans-serif; white-space: nowrap; }

.grip { width: 7px; flex: none; align-self: stretch; background: radial-gradient(#999 1px, transparent 1px) 1px 1px / 3px 3px; }
.sep { flex: none; width: 10px; height: 18px; background: linear-gradient(#555, #555) 50% / 1px 100% no-repeat, linear-gradient(#222, #222) 50% / 3px 5px no-repeat; }
.status { height: 24px; display: flex; align-items: center; padding: 0 1px; }
.dropdown { position: relative; width: 70px; margin: 0 1px; }
.dropdown select { appearance: none; width: 100%; height: 16px; padding: 0 3px; background: #fff; border: 1px solid #777; }
.dropdown svg { position: absolute; right: 1px; top: 1px; width: 13px; height: 14px; padding: 1px; background: #e6e6e6; border: 1px solid #aaa; pointer-events: none; }
.group { display: grid; grid-auto-flow: column; grid-auto-columns: 1fr; flex: none; }
.g3 { width: 62px; }
.g4 { width: 86px; }
.g5 { width: 102px; }
.g10 { width: 205px; }
.end { margin-left: auto; width: 61px; }
.group button { height: 21px; display: grid; place-items: center; border: 1px solid transparent; }
.group svg, .abs svg { width: 18px; height: 18px; }
.group .on { background: #f4f4f4; border-color: #bbb #fff #fff #bbb; }
.chev { flex: none; width: 10px; height: 16px; margin: 0 3px 0 2px; }
.mask { width: 71px; height: 18px; padding: 0 2px 2px; border: 1px solid; border-color: #777 #eee #eee #777; }
.abs { width: 26px; padding-left: 4px; }
.coords { display: flex; gap: 6px; margin-left: 3px; }
.coords label { display: flex; align-items: center; font-size: 10px; white-space: nowrap; }
.coords input { width: 28px; height: 18px; background: #fff; border: 1px solid; border-color: #777 #ddd #ddd #777; }

.shelf { height: 52px; display: flex; padding: 2px 2px 4px 1px; }
.shelfside { width: 21px; display: flex; flex-direction: column; justify-content: flex-end; align-items: flex-end; gap: 1px; }
.shelfside button { width: 16px; height: 14px; border: 1px solid; border-color: #fff #999 #999 #fff; display: grid; place-items: center; }
.shelfside svg { width: 11px; height: 11px; }
.shelfmain { flex: 1; min-width: 0; display: flex; flex-direction: column; padding-left: 2px; }
.tabs { height: 15px; display: flex; align-items: center; }
.tabs button { flex: none; width: 37px; padding-left: 4px; text-align: left; line-height: 12px; border-right: 1px solid #555; white-space: nowrap; }
.tabs .nobar { border-color: transparent; }
.tabs .active { padding-bottom: 3px; }
.tabs .w35 { width: 35px; padding-left: 1px; }
.tabs .w39 { width: 40px; }
.tabs .w41 { width: 41px; }
.tabs .w42 { width: 42px; }
.tabs .w45 { width: 45px; }
.tabs .w48 { width: 48px; }
.tabs .w54 { width: 54px; }
.trash { width: 12px; height: 13px; margin: 0 3px 0 auto; }
.shelfbox { flex: 1; display: flex; justify-content: space-between; border: 2px solid; border-color: #777 #999 #aaa #777; padding: 1px 2px 1px 1px; }
.shelficons { display: grid; grid-auto-flow: column; grid-auto-columns: 1fr; width: 345px; }
.shelficons button { background: #bcbcbc; margin-right: 2px; display: grid; place-items: center; }
.shelficons svg { width: 23px; height: 23px; }
.scroll { display: flex; flex-direction: column; justify-content: space-between; }
.scroll svg { width: 9px; height: 9px; }

.work { flex: 1; display: grid; grid-template-columns: 30px minmax(0, 1fr) 327px; }
.toolbox { display: flex; flex-direction: column; padding: 7px 3px 1px 2px; border-right: 1px solid #ddd; }
.tools, .layouts { display: grid; grid-template-columns: minmax(0, 1fr); grid-auto-rows: 1fr; gap: 2px; }
.tools { height: 266px; }
.layouts { height: 184px; margin-top: 6px; }
.tools button, .layouts button { display: grid; place-items: center; min-height: 0; background: #c6c6c6; border: 1px solid #b4b4b4; }
.tools svg, .layouts svg { width: 22px; height: 22px; }
.tools .current { border: 2px solid #10106a; background: #ccc; }
.tools .current svg { width: 20px; height: 20px; }
.layouts button { border-color: #555; }
.layouts .more { background: #eee; border-color: #fff #888 #888 #fff; }
.bigmaya { width: 24px; height: 25px; margin-top: auto; }

.panel { display: flex; flex-direction: column; border: solid #9fb4c8; border-width: 1px 2px 2px; margin-top: 1px; min-width: 0; }
.panelmenu { height: 15px; display: flex; gap: 7px; padding-left: 4px; background: #f1f1f1; }
.panelbar { height: 17px; display: flex; align-items: center; border-top: 1px solid #999; background: #e8e8e8; }
.panelbar .sep { width: 8px; height: 14px; }
.vg { display: grid; grid-auto-flow: column; gap: 2px; margin: 0 2px 0 1px; }
.vg svg { width: 15px; height: 15px; background: #b8b8b8; }
.blue { color: #174fa8; }
.dark { color: #3a3a3a; }
.pale { color: #8fb6cf; }
.red { color: #b01420; }
.view { position: relative; flex: 1; min-height: 474px; background: #929292; overflow: hidden; }
.scene { position: absolute; inset: 0; width: 100%; height: 100%; }
.grid { stroke: #7b7b7b; stroke-width: 1; }
.axis { stroke: #000; stroke-width: 2; }
.curve { fill: none; stroke: #25255c; stroke-width: 1; }
.marks { stroke: #34345c; stroke-width: 1; opacity: .6; }
.cursor { fill: #aaa; stroke: #222; stroke-width: 1; }
.gizmo { font: bold 10px "Open Sans", sans-serif; }
.gy { fill: #24d024; }
.gx { fill: #c41414; }
.gz { fill: #1010b0; }
.camname { font: bold 10px "Open Sans", sans-serif; fill: #0d3d20; }
.stats { position: absolute; left: 12px; top: 0; height: 78px; border-collapse: collapse; font: bold 9px/10px "Open Sans", sans-serif; }
.stats th, .stats td { padding: 0; vertical-align: top; }
.stats th { width: 38px; text-align: left; color: #123c22; }
.stats td { width: 39px; color: #f0f0f0; }

.settings { padding: 1px 0 0 1px; }
.hgrip { display: block; height: 4px; margin: 0 5px 0 16px; background: radial-gradient(#999 1px, transparent 1px) 0 0 / 3px 3px; }
.settingshead { display: flex; align-items: center; gap: 5px; margin: 2px 1px 0 0; }
.settingshead h2 { flex: 1; padding-left: 1px; }
.settingshead button { width: 61px; height: 17px; border: 1px solid; border-color: #fff #666 #666 #fff; }
.frame { margin: 5px 25px 0 3px; border: 1px solid #aaa; }
.framehead { display: flex; align-items: center; gap: 4px; }
.framehead button { width: 14px; height: 13px; border: 1px solid; border-color: #fff #777 #777 #fff; display: grid; place-items: center; }
.framehead svg { width: 8px; height: 8px; }
.framehead h3 { font: bold 10px/13px "Liberation Sans", sans-serif; }
.opts { display: grid; grid-template-columns: 103px 97px 1fr; grid-auto-rows: 12px; line-height: 12px; padding-bottom: 1px; }
.name { text-align: right; padding-right: 5px; }
.opts label { display: flex; align-items: center; gap: 5px; }
.opts input { appearance: none; width: 8px; height: 8px; border-radius: 50%; background: #fff; border: 1px solid; border-color: #777 #ccc #ccc #777; }
.opts input:checked { background: radial-gradient(#000 0 1px, #fff 2px); }

.row { display: flex; align-items: stretch; padding: 1px 1px 1px 1px; }
.time { height: 26px; }
.timeline { flex: 1; list-style: none; display: grid; grid-template-columns: repeat(24, minmax(0, 1fr)); border: 1px solid; border-color: #888 #eee #eee #888; padding: 0 5px 0 3px; background: #f3f4f4; margin-left: 1px; }
.timeline li { display: flex; flex-direction: column; justify-content: space-between; padding-left: 8px; font: bold 10px/10px "Open Sans", sans-serif; background: linear-gradient(#222, #222) 0 100% / 2px 10px no-repeat; }
.timeline .now { background: #000; color: #fff; }
.num { width: 52px; background: #fff; border: 1px solid; border-color: #777 #eee #eee #777; padding: 0 1px 2px; }
.time .num { margin: 4px 2px 2px 4px; height: 17px; width: 51px; }
.play { display: grid; grid-template-columns: repeat(8, 1fr); width: 175px; }
.play button, .arrow, .tiny { border: 1px solid; border-color: #fff #ccc #ccc #fff; display: grid; place-items: center; }
.play svg { width: 17px; height: 13px; }
.flip { transform: scaleX(-1); }
.range { height: 21px; gap: 2px; padding-bottom: 2px; }
.range .grip { margin-right: -1px; }
.track { flex: 1; background: #a5a5a5; border: 1px solid; border-color: #777 #ccc #ccc #777; padding: 1px 3px; margin: 0 1px; }
.thumb { width: 50%; height: 100%; background: #ececec; display: flex; justify-content: space-between; align-items: center; padding: 0 3px 0 4px; }
.thumb button { width: 8px; height: 11px; border: 1px solid; border-color: transparent #999 #999 transparent; }
.arrow { width: 17px; }
.arrow svg { width: 14px; height: 14px; }
.pick { width: 77px; padding: 0 1px 2px; border: 1px solid; border-color: #777 #eee #eee #777; }
.keybtn { width: 22px; display: grid; place-items: center; }
.keybtn svg { width: 18px; height: 13px; }
.tiny { width: 15px; }
.tiny svg { width: 12px; height: 13px; }
.cmd { height: 20px; }
.cmd label { width: 39px; text-align: center; font: bold 10px/18px "Open Sans", sans-serif; }
.cmd input { flex: 532; min-width: 0; background: #fff; border: 1px solid; border-color: #666 #ddd #ddd #666; margin-right: 4px; }
.cmd output { flex: 522; background: #858e98; border: 1px solid #666; margin-right: 3px; }
.help { height: 17px; padding-bottom: 0; }
.help p { flex: 1; margin-left: 1px; display: flex; border: 1px solid; border-color: #888 #ddd #ddd #888; padding-left: 10px; line-height: 14px; }
.help span { width: 54px; white-space: nowrap; }
.help span:first-child { width: 106px; }
```
FILE: scene.js
```js
const NS = "http://www.w3.org/2000/svg";

// Perspective projection of a ground-plane point; u and v run from -1 to 1.
function project(u, v) {
  const w = 1 - 0.0763 * u - 0.2295 * v;
  return [(493 + 222.8 * u - 198.6 * v) / w, (393 + 35 * u + 109 * v) / w];
}

function line(parent, [x1, y1], [x2, y2]) {
  const el = document.createElementNS(NS, "line");
  Object.entries({ x1, y1, x2, y2 }).forEach(([k, n]) => el.setAttribute(k, n.toFixed(1)));
  parent.appendChild(el);
}

const grid = document.getElementById("grid");
for (let i = -12; i <= 12; i++) {
  if (i === 0) continue;
  line(grid, project(i / 12, -1), project(i / 12, 1));
  line(grid, project(-1, i / 12), project(1, i / 12));
}

const marks = document.getElementById("marks");
const editPoints = [[244, 405], [267, 372], [338, 336], [438, 361], [522, 286], [562, 282], [668, 365], [585, 415], [561, 342],
  [487, 265], [380, 269], [358, 377], [440, 459], [517, 458], [690, 504], [677, 573], [585, 597], [468, 588], [340, 499], [251, 472]];
for (const [x, y] of editPoints) {
  line(marks, [x - 2, y - 2], [x + 2, y + 2]);
  line(marks, [x - 2, y + 2], [x + 2, y - 2]);
}

const timeline = document.getElementById("timeline");
for (let frame = 1; frame <= 24; frame++) {
  const li = document.createElement("li");
  li.append(String(frame));
  if (frame === 1) {
    li.className = "now";
    const current = document.createElement("span");
    current.textContent = "1";
    li.append(current);
  }
  timeline.appendChild(li);
}
```
